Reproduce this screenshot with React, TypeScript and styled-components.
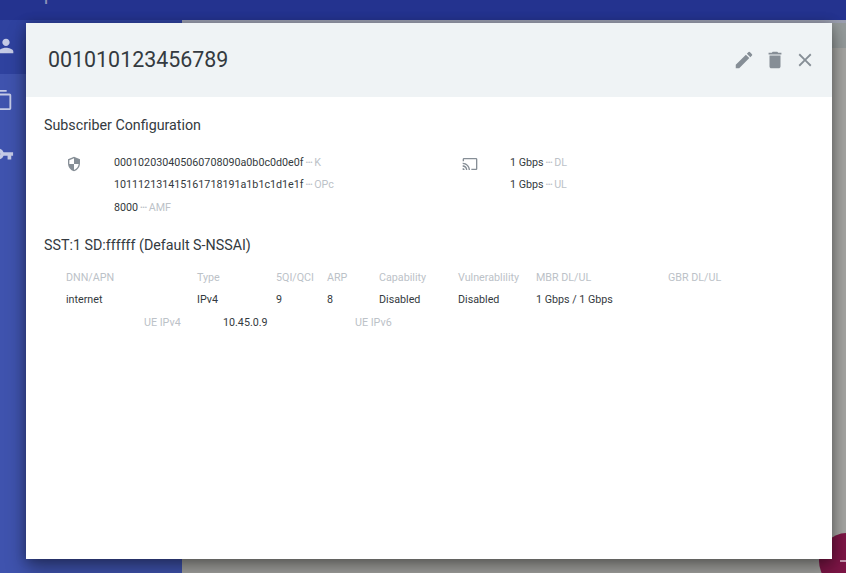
import React from 'react';
import styled, { createGlobalStyle } from 'styled-components';
import { MdPerson, MdVpnKey, MdEdit, MdDelete, MdClose, MdSecurity, MdCast, MdAdd, MdContentCopy } from 'react-icons/md';

const Global = createGlobalStyle`
  html, body { margin: 0; padding: 0; background: #8f9595; }
  * { box-sizing: border-box; }
`;

const Page = styled.div`
  position: relative;
  width: 846px;
  height: 573px;
  overflow: hidden;
  display: flex;
  flex-direction: column;
  background: #8f9595;
  font-family: Roboto, "Liberation Sans", sans-serif;
`;

const TopBar = styled.header`
  height: 20px;
  flex: none;
  background: #24338f;
  padding-left: 30px;
  overflow: hidden;
  color: #8d93b8;
  font-size: 20px;
  line-height: 20px;
`;

const Brand = styled.div`
  margin-top: -17px;
`;

const Body = styled.div`
  flex: 1;
  display: flex;
  min-height: 0;
`;

const Sidebar = styled.nav`
  width: 182px;
  flex: none;
  background: #3f53ae;
  display: flex;
  flex-direction: column;
`;

const NavItem = styled.div<{ $active?: boolean; $shift: number }>`
  height: 54px;
  flex: none;
  display: flex;
  align-items: center;
  padding-bottom: 2px;
  color: #c5cbe6;
  background: ${p => (p.$active ? '#2f429f' : 'transparent')};
  svg { margin-left: ${p => p.$shift}px; flex: none; }
`;

const Content = styled.main`
  flex: 1;
  display: flex;
  flex-direction: column;
  background: #a5a5a2;
  border-top: 3px solid #9a9eb0;
`;

const SubBar = styled.div`
  height: 25px;
  flex: none;
  background: #949a9a;
`;

const Modal = styled.section`
  position: absolute;
  left: 26px;
  top: 23px;
  width: 806px;
  height: 536px;
  background: #fff;
  box-shadow: 0 10px 18px rgba(0, 0, 0, 0.38), 0 0 10px rgba(0, 0, 0, 0.24);
  display: flex;
  flex-direction: column;
`;

const ModalHeader = styled.div`
  height: 74px;
  flex: none;
  background: #eff3f5;
  display: flex;
  align-items: center;
  justify-content: space-between;
  padding: 0 16px 2px 22px;
`;

const Title = styled.h1`
  margin: 0;
  font-size: 21.4px;
  font-weight: 400;
  color: #343a40;
`;

const Actions = styled.div`
  display: flex;
  align-items: center;
  gap: 8.5px;
  padding-top: 2px;
  color: #868e96;
`;

const ActionIcon = styled.span`
  width: 22px;
  height: 22px;
  display: flex;
  align-items: center;
  justify-content: center;
`;

const ModalBody = styled.div`
  padding: 18px 18px 0;
  color: #343a40;
`;

const SectionTitle = styled.h2`
  margin: 0;
  font-size: 14.28px;
  line-height: 20px;
  font-weight: 400;
  color: #343a40;
`;

const ConfigRow = styled.div`
  display: flex;
  padding-top: 16px;
  height: 99px;
`;

const IconCell = styled.div`
  width: 70px;
  padding: 5px 0 0 22px;
  color: #868e96;
  flex: none;
  svg { display: block; }
`;

const Column = styled.div<{ $w: number }>`
  width: ${p => p.$w}px;
  flex: none;
`;

const KVRow = styled.div`
  height: 22.5px;
  display: flex;
  align-items: center;
  font-size: 10.72px;
  color: #343a40;
`;

const Dots = styled.span`
  font-size: 8px;
  color: #bcc2c8;
  margin: 0 2px;
  letter-spacing: -0.5px;
`;

const Label = styled.span`
  color: #bcc2c8;
`;

const SliceTitle = styled(SectionTitle)`
  line-height: 22px;
`;

const Table = styled.div`
  padding: 10px 0 0 22px;
`;

const Row = styled.div`
  display: flex;
  height: 22.5px;
  align-items: center;
  font-size: 10.72px;
  color: #343a40;
`;

const Cell = styled.div<{ $w: number; $head?: boolean }>`
  width: ${p => p.$w}px;
  flex: none;
  color: ${p => (p.$head ? '#bcc2c8' : '#343a40')};
`;

const Fab = styled.div`
  position: absolute;
  left: 819px;
  top: 533px;
  width: 56px;
  height: 56px;
  border-radius: 50%;
  background: #7d1546;
  color: #c79ab0;
  display: flex;
  align-items: center;
  justify-content: center;
`;

const cols = [
  ['DNN/APN', 131, 'internet'],
  ['Type', 79, 'IPv4'],
  ['5QI/QCI', 51, '9'],
  ['ARP', 52, '8'],
  ['Capability', 79, 'Disabled'],
  ['Vulnerablility', 78, 'Disabled'],
  ['MBR DL/UL', 132, '1 Gbps / 1 Gbps'],
  ['GBR DL/UL', 80, ''],
] as const;

const KV = ({ v, k }: { v: string; k: string }) => (
  <KVRow>
    {v}
    <Dots>•••</Dots>
    <Label>{k}</Label>
  </KVRow>
);

export default function App() {
  return (
    <Page>
      <Global />
      <TopBar>
        <Brand>Open5GS</Brand>
      </TopBar>
      <Body>
        <Sidebar>
          <NavItem $active $shift={-5}><MdPerson size={22} /></NavItem>
          <NavItem $shift={-8}><MdContentCopy size={22} /></NavItem>
          <NavItem $shift={-8}><MdVpnKey size={22} /></NavItem>
        </Sidebar>
        <Content>
          <SubBar />
        </Content>
      </Body>
      <Fab><MdAdd size={24} /></Fab>
      <Modal>
        <ModalHeader>
          <Title>001010123456789</Title>
          <Actions>
            <ActionIcon><MdEdit size={22} /></ActionIcon>
            <ActionIcon><MdDelete size={22} /></ActionIcon>
            <ActionIcon><MdClose size={22} /></ActionIcon>
          </Actions>
        </ModalHeader>
        <ModalBody>
          <SectionTitle>Subscriber Configuration</SectionTitle>
          <ConfigRow>
            <IconCell><MdSecurity size={16} /></IconCell>
            <Column $w={326}>
              <KV v="000102030405060708090a0b0c0d0e0f" k="K" />
              <KV v="101112131415161718191a1b1c1d1e1f" k="OPc" />
              <KV v="8000" k="AMF" />
            </Column>
            <IconCell><MdCast size={16} /></IconCell>
            <Column $w={200}>
              <KV v="1 Gbps" k="DL" />
              <KV v="1 Gbps" k="UL" />
            </Column>
          </ConfigRow>
          <SliceTitle>SST:1 SD:ffffff (Default S-NSSAI)</SliceTitle>
          <Table>
            <Row>{cols.map(c => <Cell key={c[0]} $w={c[1]} $head>{c[0]}</Cell>)}</Row>
            <Row>{cols.map(c => <Cell key={c[0]} $w={c[1]}>{c[2]}</Cell>)}</Row>
            <Row>
              <Cell $w={78} />
              <Cell $w={79} $head>UE IPv4</Cell>
              <Cell $w={132}>10.45.0.9</Cell>
              <Cell $w={80} $head>UE IPv6</Cell>
            </Row>
          </Table>
        </ModalBody>
      </Modal>
    </Page>
  );
}
